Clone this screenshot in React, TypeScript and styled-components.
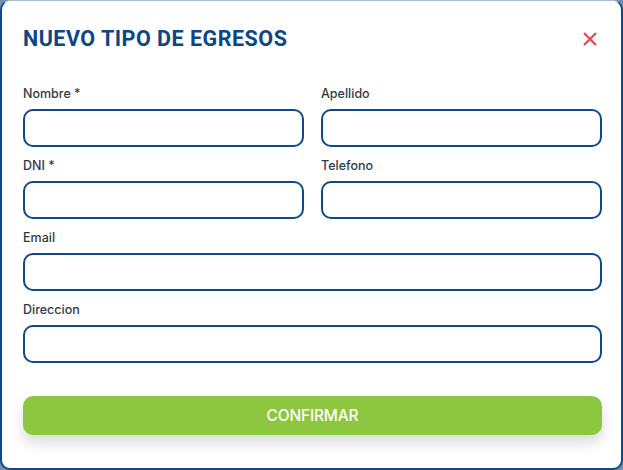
import React from "react";
import styled, { createGlobalStyle } from "styled-components";

const Global = createGlobalStyle`
  html, body { margin: 0; padding: 0; background: #6f8db0; }
  body { font-family: Inter, "Noto Sans", sans-serif; }
  * { box-sizing: border-box; }
`;

const Modal = styled.div`
  width: 623px;
  height: 470px;
  background: #ffffff;
  border: 2px solid #0e4a8a;
  border-top: 1px solid #a9bfd8;
  border-radius: 10px;
  padding: 26px 19px 0 21px;
  display: flex;
  flex-direction: column;
`;

const Header = styled.div`
  display: flex;
  align-items: center;
  justify-content: space-between;
  height: 24px;
  margin-bottom: 35px;
`;

const Title = styled.h2`
  margin: 0;
  font-family: Roboto, "Liberation Sans", sans-serif;
  font-weight: 700;
  font-size: 21.5px;
  line-height: 24px;
  color: #0e4585;
  letter-spacing: 0.5px;
`;

const CloseButton = styled.button`
  border: none;
  background: none;
  padding: 0;
  margin-right: 4px;
  width: 16px;
  height: 16px;
  display: flex;
  cursor: pointer;
`;

const Form = styled.div`
  display: grid;
  grid-template-columns: 1fr 1fr;
  column-gap: 17px;
  row-gap: 11px;
`;

const Field = styled.div<{ $full?: boolean }>`
  display: flex;
  flex-direction: column;
  grid-column: ${(p) => (p.$full ? "1 / -1" : "auto")};
`;

const Label = styled.label`
  font-family: Inter, "Noto Sans", sans-serif;
  font-weight: 500;
  font-size: 12.5px;
  line-height: 16px;
  color: #333a44;
  margin-bottom: 7px;
`;

const Input = styled.input`
  height: 38px;
  border: 2px solid #0e4a8a;
  border-radius: 10px;
  padding: 0 12px;
  font-family: Inter, sans-serif;
  font-size: 14px;
  outline: none;
  background: #fff;
`;

const Confirm = styled.button`
  margin-top: 33px;
  height: 39px;
  border: none;
  border-radius: 10px;
  background: #8dc63f;
  color: #ffffff;
  font-family: Inter, "Noto Sans", sans-serif;
  font-weight: 500;
  font-size: 15.5px;
  letter-spacing: -0.2px;
  box-shadow: 0 8px 14px rgba(0, 0, 0, 0.14);
  cursor: pointer;
`;

const fields: { label: string; full?: boolean }[] = [
  { label: "Nombre *" },
  { label: "Apellido" },
  { label: "DNI *" },
  { label: "Telefono" },
  { label: "Email", full: true },
  { label: "Direccion", full: true },
];

export default function App() {
  return (
    <>
      <Global />
      <Modal>
        <Header>
          <Title>NUEVO TIPO DE EGRESOS</Title>
          <CloseButton aria-label="Cerrar">
            <svg width="16" height="16" viewBox="0 0 16 16">
              <path d="M2 2 L14 14 M14 2 L2 14" stroke="#e8474c" strokeWidth="2.2" strokeLinecap="butt" />
            </svg>
          </CloseButton>
        </Header>
        <Form>
          {fields.map((f) => (
            <Field key={f.label} $full={f.full}>
              <Label>{f.label}</Label>
              <Input />
            </Field>
          ))}
        </Form>
        <Confirm>CONFIRMAR</Confirm>
      </Modal>
    </>
  );
}
